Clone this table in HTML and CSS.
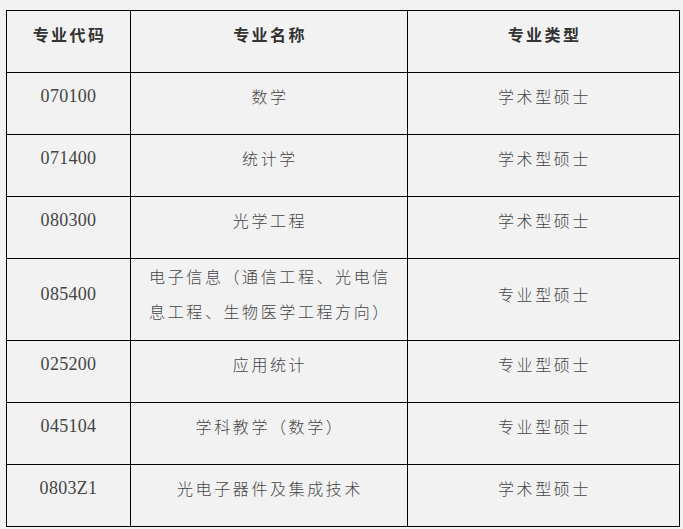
FILE: index.html
```html
<!DOCTYPE html>
<html lang="zh-CN">
<head>
<meta charset="utf-8">
<title>专业目录</title>
<link rel="stylesheet" href="styles.css">
</head>
<body>
<table class="majors">
  <colgroup>
    <col class="c1"><col class="c2"><col class="c3">
  </colgroup>
  <tr class="head">
    <th>专业代码</th><th>专业名称</th><th>专业类型</th>
  </tr>
  <tr><td class="code">070100</td><td>数学</td><td>学术型硕士</td></tr>
  <tr><td class="code">071400</td><td>统计学</td><td>学术型硕士</td></tr>
  <tr><td class="code">080300</td><td>光学工程</td><td>学术型硕士</td></tr>
  <tr class="tall"><td class="code">085400</td><td>电子信息（通信工程、光电信息工程、生物医学工程方向）</td><td>专业型硕士</td></tr>
  <tr><td class="code">025200</td><td>应用统计</td><td>专业型硕士</td></tr>
  <tr><td class="code">045104</td><td>学科教学（数学）</td><td>专业型硕士</td></tr>
  <tr><td class="code">0803Z1</td><td>光电子器件及集成技术</td><td>学术型硕士</td></tr>
</table>
</body>
</html>
```
FILE: styles.css
```css
html, body {
  margin: 0;
  background: #f2f2f2;
}
body {
  padding: 10px 0 0 6px;
}
.majors {
  border-collapse: collapse;
  table-layout: fixed;
  width: 673px;
  font-family: "Noto Sans CJK SC", sans-serif;
  color: #454545;
}
.c1 { width: 124px; }
.c2 { width: 277px; }
.c3 { width: 272px; }
.majors th,
.majors td {
  border: 1px solid #000;
  height: 62px;
  box-sizing: border-box;
  padding: 0 10px 16px 12px;
  vertical-align: middle;
  text-align: center;
  line-height: 36px;
  font-size: 16px;
  font-weight: 300;
  letter-spacing: 2.6px;
}
.majors th {
  font-weight: 700;
  color: #333;
  letter-spacing: 2.4px;
}
.majors .tall td {
  height: 81px;
  padding-bottom: 11px;
  line-height: 35px;
}
.majors td.code {
  font-family: "Liberation Serif", serif;
  font-size: 18px;
  font-weight: 400;
  letter-spacing: 0.3px;
  color: #444;
  padding-left: 10px;
}
```
